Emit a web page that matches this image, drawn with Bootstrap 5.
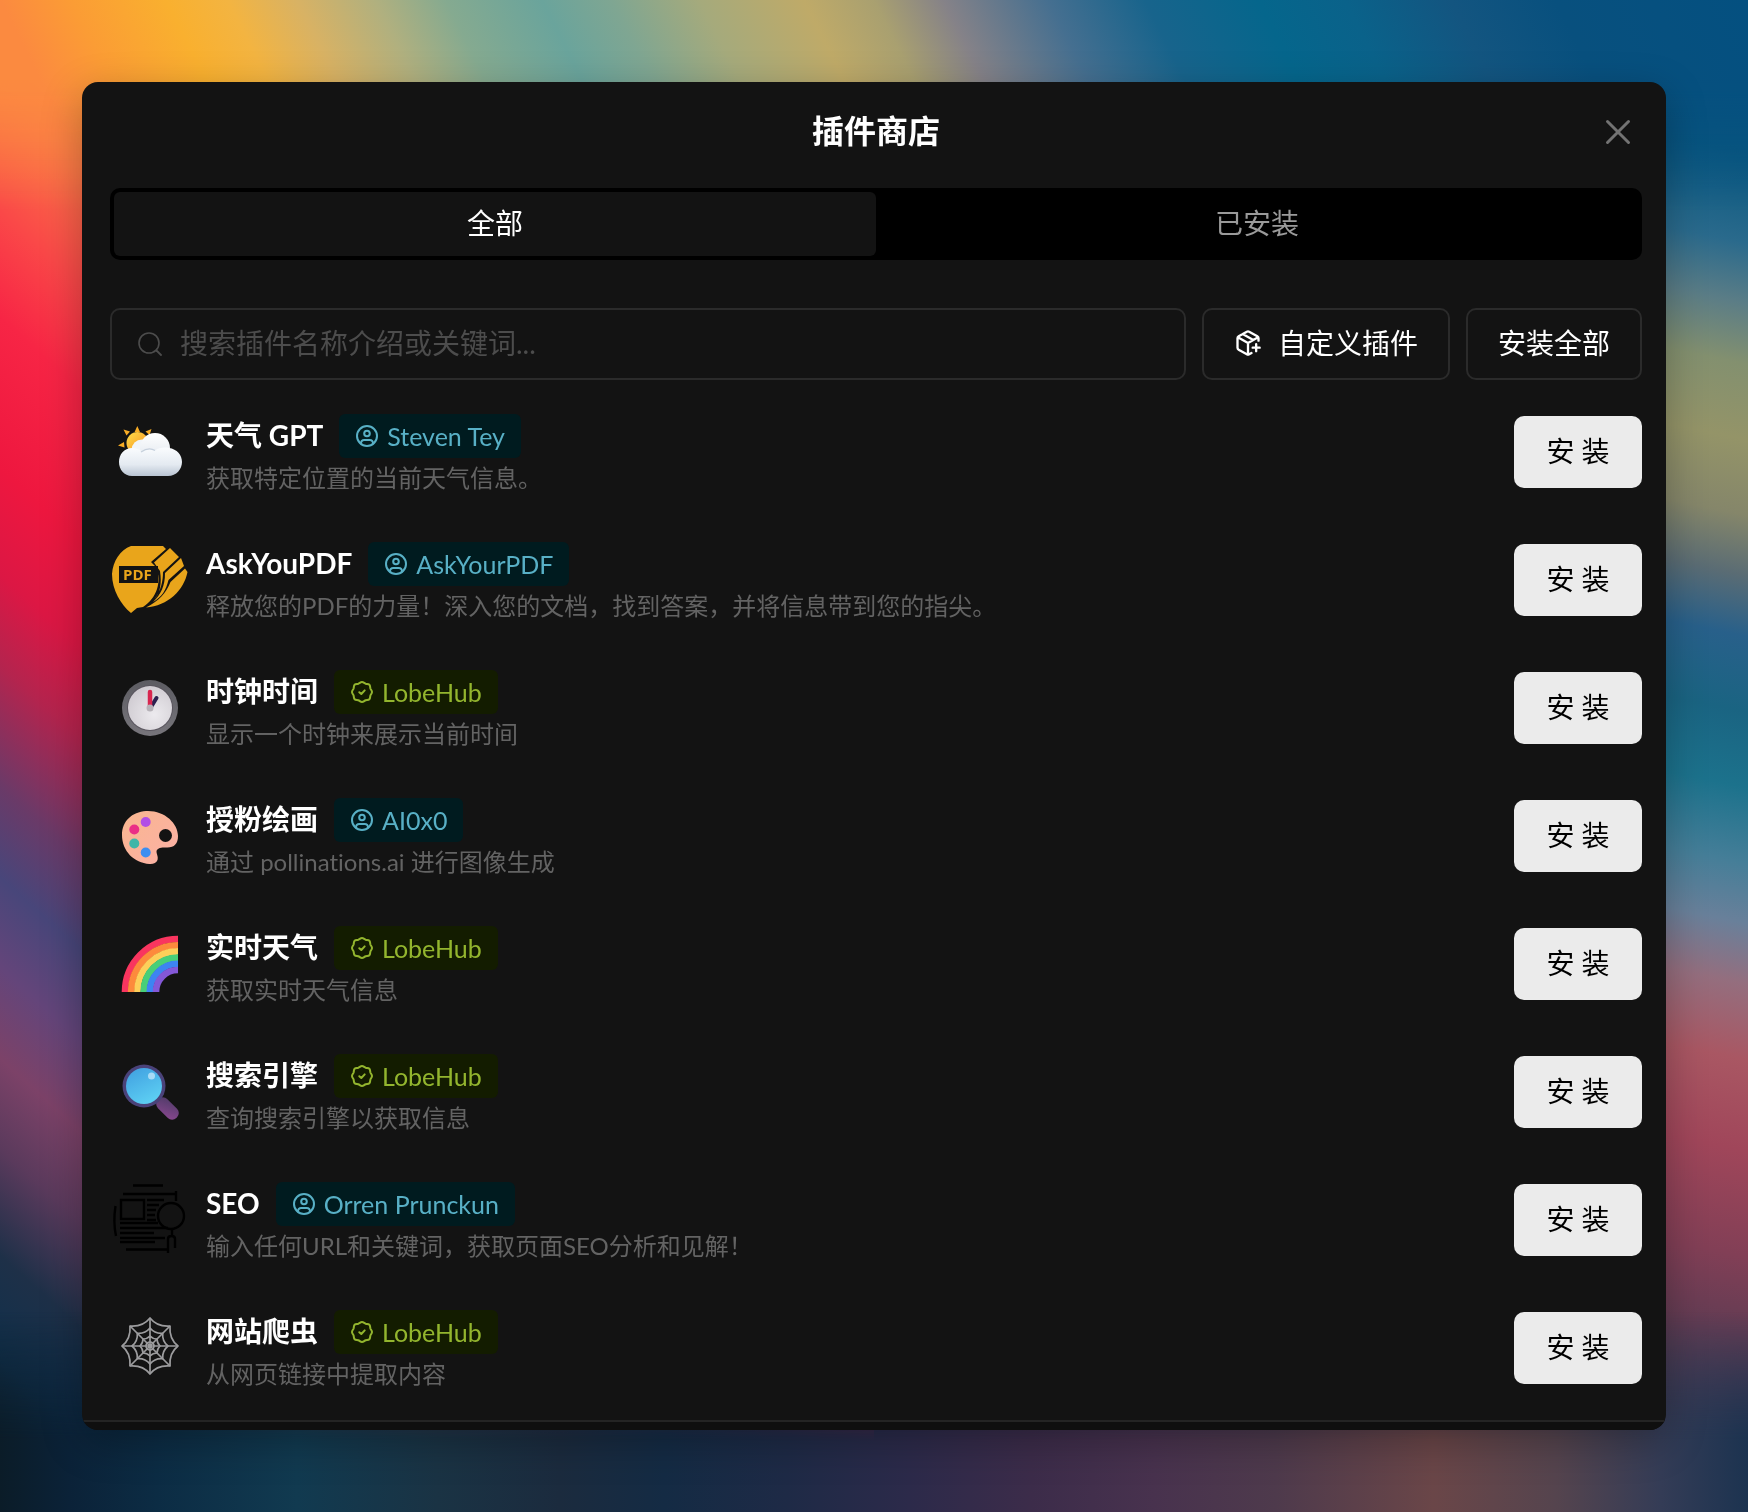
<!DOCTYPE html>
<html lang="zh-CN" data-bs-theme="dark">
<head>
<meta charset="utf-8">
<meta name="viewport" content="width=device-width, initial-scale=1">
<title>插件商店</title>
<link href="https://cdn.jsdelivr.net/npm/bootstrap@5.3.0/dist/css/bootstrap.min.css" rel="stylesheet">
<style>
  body { min-height: 100vh; padding: 82px; background: #12304a; color: #fff; font-family: Lato, "Noto Sans CJK SC", sans-serif; font-size: 28px; line-height: 40px; font-variant-ligatures: none; }
  .backdrop-art { position: fixed; inset: 0; width: 100%; height: 100%; z-index: -1; }
  .store { position: relative; background: #131313; border-radius: 16px; box-shadow: 0 12px 40px rgba(0,0,0,.28); overflow: hidden; }
  .store-head { height: 106px; padding: 0 24px 8px 28px; }
  .store-title { font-size: 32px; line-height: 48px; font-weight: 700; }
  .store-close { position: absolute; top: 26px; right: 24px; width: 48px; height: 48px; color: #737373; }
  .store-body { padding: 0 24px 8px 28px; }
  .seg { background: #000; border-radius: 10px; padding: 4px; margin-bottom: 48px; }
  .seg .btn { --bs-btn-color: #9a9a9a; --bs-btn-hover-color: #fff; height: 64px; border-radius: 6px; border: 0; padding: 0 0 2px; font-size: 28px; }
  .seg .btn.active { background: #131313; color: #fff; }
  .tools { gap: 16px; margin-bottom: 8px; }
  .field { height: 72px; border: 2px solid #2b2b2b; border-radius: 10px; padding: 0 26px; gap: 18px; color: #4c4c4c; }
  .field .form-control { background: none; border: 0; padding: 0 0 2px; font-size: 28px; line-height: 40px; color: #fff; box-shadow: none; }
  .field .form-control::placeholder { color: #4c4c4c; opacity: 1; }
  .line-btn { height: 72px; border: 2px solid #2b2b2b; border-radius: 10px; padding: 0 30px 2px; font-size: 28px; line-height: 40px; --bs-btn-color: #fff; gap: 16px; }
  .plugin { height: 128px; gap: 16px; }
  .avatar { width: 80px; height: 80px; }
  .plugin-info { padding-top: 8px; }
  .plugin-name { font-size: 28px; line-height: 42px; padding-bottom: 2px; font-weight: 700; }
  .author { height: 44px; border-radius: 6px; padding: 0 16px; gap: 8px; font-size: 25px; line-height: 44px; }
  .author-user { background: #001b1f; color: #58b0c6; }
  .author-official { background: #131c00; color: #93b52e; }
  .plugin-desc { font-size: 24px; line-height: 40px; color: #636363; }
  .install { width: 128px; height: 72px; border-radius: 10px; padding: 0 0 2px; font-size: 28px; --bs-btn-bg: #ebebeb; --bs-btn-color: #000; --bs-btn-hover-bg: #fff; }
  .store-foot { height: 10px; border-top: 2px solid #242424; background: #0f0f0f; }
  .stroke-ico { fill: none; stroke: currentColor; stroke-width: 2; stroke-linecap: round; stroke-linejoin: round; flex-shrink: 0; }
</style>
<script src="https://cdn.jsdelivr.net/npm/bootstrap@5.3.0/dist/js/bootstrap.bundle.min.js" defer></script>
</head>
<body>

<svg class="backdrop-art" viewBox="0 0 1748 1512" preserveAspectRatio="none" aria-hidden="true">
  <defs>
    <linearGradient id="bgL" gradientUnits="userSpaceOnUse" x1="0" y1="0" x2="-752" y2="835">
      <stop offset="0" stop-color="#fb9040"/><stop offset=".06" stop-color="#fb7448"/><stop offset=".14" stop-color="#fa4848"/><stop offset=".21" stop-color="#f72545"/><stop offset=".31" stop-color="#ee173f"/><stop offset=".38" stop-color="#dc1744"/><stop offset=".44" stop-color="#b4244e"/><stop offset=".52" stop-color="#6a3a68"/><stop offset=".58" stop-color="#48467a"/><stop offset=".64" stop-color="#64457a"/><stop offset=".7" stop-color="#7c4268"/><stop offset=".76" stop-color="#5a3a5c"/><stop offset=".83" stop-color="#1e3048"/><stop offset=".9" stop-color="#10304c"/><stop offset="1" stop-color="#0a1c28"/>
    </linearGradient>
    <linearGradient id="bgR" gradientUnits="userSpaceOnUse" x1="1666" y1="0" x2="1375" y2="1454">
      <stop offset="0" stop-color="#06507f"/><stop offset=".09" stop-color="#08577f"/><stop offset=".15" stop-color="#2a6a8c"/><stop offset=".19" stop-color="#5b7d86"/><stop offset=".23" stop-color="#83906f"/><stop offset=".28" stop-color="#949468"/><stop offset=".33" stop-color="#85866a"/><stop offset=".37" stop-color="#5a6c74"/><stop offset=".41" stop-color="#28608a"/><stop offset=".46" stop-color="#1a6482"/><stop offset=".51" stop-color="#1c728c"/><stop offset=".56" stop-color="#457e98"/><stop offset=".6" stop-color="#69809a"/><stop offset=".64" stop-color="#946e7e"/><stop offset=".69" stop-color="#a95763"/><stop offset=".75" stop-color="#a0465a"/><stop offset=".82" stop-color="#823f56"/><stop offset=".89" stop-color="#573b52"/><stop offset=".94" stop-color="#373650"/><stop offset="1" stop-color="#1a2c48"/>
    </linearGradient>
    <linearGradient id="bgT" gradientUnits="userSpaceOnUse" x1="0" y1="0" x2="1398" y2="-699">
      <stop offset="0" stop-color="#fb8a40"/><stop offset=".04" stop-color="#fb9c35"/><stop offset=".095" stop-color="#f9b02f"/><stop offset=".13" stop-color="#f3b441"/><stop offset=".17" stop-color="#d8b264"/><stop offset=".215" stop-color="#b0b07f"/><stop offset=".255" stop-color="#85aa90"/><stop offset=".31" stop-color="#6aa49c"/><stop offset=".35" stop-color="#7fa692"/><stop offset=".4" stop-color="#a5aa7c"/><stop offset=".46" stop-color="#bfaa68"/><stop offset=".5" stop-color="#a9a070"/><stop offset=".54" stop-color="#858288"/><stop offset=".6" stop-color="#456f90"/><stop offset=".655" stop-color="#18648c"/><stop offset=".72" stop-color="#05668c"/><stop offset=".77" stop-color="#0a628a"/><stop offset=".83" stop-color="#135580"/><stop offset=".89" stop-color="#08507e"/><stop offset="1" stop-color="#045080"/>
    </linearGradient>
    <linearGradient id="bgB">
      <stop offset="0" stop-color="#0b1c28"/><stop offset=".04" stop-color="#0b2238"/><stop offset=".09" stop-color="#0c2c44"/><stop offset=".17" stop-color="#113a50"/><stop offset=".25" stop-color="#1a3344"/><stop offset=".32" stop-color="#1b2b3e"/><stop offset=".38" stop-color="#142b44"/><stop offset=".45" stop-color="#1e2a46"/><stop offset=".52" stop-color="#2c2a4a"/><stop offset=".59" stop-color="#3c2c4a"/><stop offset=".66" stop-color="#48324e"/><stop offset=".73" stop-color="#4e3a4c"/><stop offset=".82" stop-color="#6a4648"/><stop offset=".89" stop-color="#55444e"/><stop offset=".95" stop-color="#343c56"/><stop offset="1" stop-color="#1c3350"/>
    </linearGradient>
    <linearGradient id="fadeT" x1="0" y1="0" x2="0" y2="1"><stop offset=".38" stop-color="#fff"/><stop offset="1" stop-color="#000"/></linearGradient>
    <linearGradient id="fadeB" x1="0" y1="1" x2="0" y2="0"><stop offset=".36" stop-color="#fff"/><stop offset="1" stop-color="#000"/></linearGradient>
    <mask id="mT"><rect width="1748" height="210" fill="url(#fadeT)"/></mask>
    <mask id="mB"><rect y="1312" width="1748" height="200" fill="url(#fadeB)"/></mask>
  </defs>
  <rect width="874" height="1512" fill="url(#bgL)"/>
  <rect x="874" width="874" height="1512" fill="url(#bgR)"/>
  <rect width="1748" height="210" fill="url(#bgT)" mask="url(#mT)"/>
  <rect y="1312" width="1748" height="200" fill="url(#bgB)" mask="url(#mB)"/>
</svg>

<svg class="d-none" aria-hidden="true">
  <symbol id="ico-user" viewBox="0 0 24 24"><circle cx="12" cy="12" r="10"/><circle cx="12" cy="9.500" r="2.800"/><path d="M6 19.600c-.2-2.200 1.200-3.600 3.200-3.600h5.600c2 0 3.400 1.400 3.200 3.600"/></symbol>
  <symbol id="ico-check" viewBox="0 0 24 24"><path d="M12 2c1.500 0 2.300 1.300 3.700 1.800 1.300.4 2.700 0 3.700 1s.6 2.400 1 3.700C20.800 9.700 22 10.500 22 12s-1.200 2.300-1.600 3.500c-.4 1.300 0 2.700-1 3.700s-2.400.6-3.700 1C14.300 20.700 13.500 22 12 22s-2.300-1.300-3.700-1.800c-1.300-.4-2.700 0-3.700-1s-.6-2.400-1-3.700C3.200 14.300 2 13.500 2 12s1.200-2.300 1.600-3.500c.4-1.300 0-2.700 1-3.700s2.400-.6 3.700-1C9.700 3.300 10.500 2 12 2Z"/><path d="m9.300 12.200 2 1.800 3.400-3.600"/></symbol>
</svg>

<main class="store" role="dialog" aria-labelledby="store-title">
  <header class="store-head d-flex align-items-center justify-content-center">
    <h1 class="store-title m-0" id="store-title">插件商店</h1>
    <button class="store-close btn border-0 p-0 d-flex align-items-center justify-content-center" type="button" aria-label="关闭">
      <svg class="stroke-ico" width="28" height="28" viewBox="0 0 28 28"><path d="M3.500 3.500 24.500 24.500M24.500 3.500 3.500 24.500" stroke-width="3"/></svg>
    </button>
  </header>

  <div class="store-body">
    <div class="seg d-flex" role="tablist">
      <button class="btn active flex-fill w-50" type="button" role="tab" aria-selected="true">全部</button>
      <button class="btn flex-fill w-50" type="button" role="tab" aria-selected="false">已安装</button>
    </div>

    <div class="tools d-flex">
      <div class="field d-flex align-items-center flex-grow-1">
        <svg class="stroke-ico" width="24" height="24" viewBox="0 0 24 24"><circle cx="11" cy="11" r="10" stroke-width="1.600"/><path d="m18.500 18.500 4.500 4.500" stroke-width="1.800"/></svg>
        <input class="form-control" type="text" aria-label="搜索插件" placeholder="搜索插件名称介绍或关键词...">
      </div>
      <button class="line-btn btn d-flex align-items-center flex-shrink-0" type="button">
        <svg class="stroke-ico" width="28" height="28" viewBox="0 0 24 24"><path d="M16 16h6M19 13v6M21 10V8a2 2 0 0 0-1-1.730l-7-4a2 2 0 0 0-2 0l-7 4A2 2 0 0 0 3 8v8a2 2 0 0 0 1 1.730l7 4a2 2 0 0 0 2 0l2-1.140M7.500 4.270l9 5.150M3.290 7 12 12l8.710-5M12 22V12"/></svg>
        自定义插件
      </button>
      <button class="line-btn btn flex-shrink-0" type="button">安装全部</button>
    </div>

    <ul class="list-unstyled m-0">
      <li class="plugin d-flex align-items-center">
        <svg class="avatar flex-shrink-0" viewBox="0 0 80 80" role="img" aria-label="天气">
          <defs>
            <linearGradient id="sun" x1="0" y1="0" x2="1" y2="1"><stop offset="0" stop-color="#ffdd4a"/><stop offset="1" stop-color="#f58a1c"/></linearGradient>
            <linearGradient id="cl1" x1="0" y1="0" x2="0" y2="1"><stop offset="0" stop-color="#fff"/><stop offset="1" stop-color="#dde4ec"/></linearGradient>
            <linearGradient id="cl2" x1="0" y1="0" x2="0" y2="1"><stop offset="0" stop-color="#fafcfe"/><stop offset=".6" stop-color="#e4eaf1"/><stop offset="1" stop-color="#b9c4d2"/></linearGradient>
          </defs>
          <path fill="#f9ad25" d="m27.300 14 2.700 6h-5.400ZM13.500 17.500l6.500 2-3.500 4ZM41.500 17l-2 6-4-3.500ZM8 33.500l6-3.500.5 5.500ZM12 44l2.500-5 3.500 3Z"/>
          <circle cx="27.500" cy="31" r="11" fill="url(#sun)"/>
          <circle cx="32" cy="38" r="10.500" fill="#f1f5f9"/>
          <circle cx="45" cy="36" r="15" fill="url(#cl1)"/>
          <path fill="url(#cl2)" d="M22 36c4 0 7 1.500 10 3.500 4-3 9-3.500 13-1 4-3 9-3.500 14-2.500 8 1 13 7 13 14s-5.500 14-14 14H22C14 64 9 57.500 9 50s5-14 13-14Z"/>
          <path d="M31 40c5-3.500 10-4 14-1.500" fill="none" stroke="#c6d0dc" stroke-width="1.300"/>
        </svg>
        <div class="plugin-info flex-grow-1">
          <div class="d-flex align-items-center gap-3"><h2 class="plugin-name m-0">天气 GPT</h2><span class="author author-user d-flex align-items-center"><svg class="stroke-ico" width="24" height="24"><use href="#ico-user"/></svg>Steven Tey</span></div>
          <p class="plugin-desc m-0">获取特定位置的当前天气信息。</p>
        </div>
        <button class="install btn flex-shrink-0" type="button">安 装</button>
      </li>

      <li class="plugin d-flex align-items-center">
        <svg class="avatar flex-shrink-0" viewBox="0 0 80 80" role="img" aria-label="AskYourPDF">
          <path fill="#e9a51b" d="M21 6H53L56 9 41 22 46 27C52 42 47 58 33 67L27 68 21 73C11 65 2 50 2 34 3 21 10 10 21 6Z"/>
          <path fill="#e9a51b" d="M60 8 44 22.500 50 31C52 44 50 53 44 60 51 51 53 41 53 32L69 17Z"/>
          <path fill="#e9a51b" d="M71 18 55 33C55 46 51 54 43 62 52 57 56 50 58.500 40L74 26Z"/>
          <path fill="#e9a51b" d="M75 28.500 60.500 42C56 53 49 61 36 67.500 58 66 74 50 77.500 32Z"/>
          <rect x="9" y="26" width="39" height="17" fill="#131313"/>
          <text x="13" y="40" font-family="Open Sans, sans-serif" font-weight="700" font-size="15" fill="#e9a51b">PDF</text>
        </svg>
        <div class="plugin-info flex-grow-1">
          <div class="d-flex align-items-center gap-3"><h2 class="plugin-name m-0">AskYouPDF</h2><span class="author author-user d-flex align-items-center"><svg class="stroke-ico" width="24" height="24"><use href="#ico-user"/></svg>AskYourPDF</span></div>
          <p class="plugin-desc m-0">释放您的PDF的力量！深入您的文档，找到答案，并将信息带到您的指尖。</p>
        </div>
        <button class="install btn flex-shrink-0" type="button">安 装</button>
      </li>

      <li class="plugin d-flex align-items-center">
        <svg class="avatar flex-shrink-0" viewBox="0 0 80 80" role="img" aria-label="时钟">
          <defs>
            <radialGradient id="face" cx=".6" cy=".65" r=".7"><stop offset="0" stop-color="#eceaee"/><stop offset="1" stop-color="#cfcbd1"/></radialGradient>
            <linearGradient id="rim" x1="0" y1="0" x2="0" y2="1"><stop offset="0" stop-color="#5c5c62"/><stop offset="1" stop-color="#77757b"/></linearGradient>
          </defs>
          <circle cx="40" cy="40" r="28" fill="url(#rim)"/><circle cx="40" cy="40" r="23" fill="#5a565f"/><circle cx="40" cy="40" r="22" fill="url(#face)"/>
          <path d="m41 39 5.500-9" stroke="#2b2150" stroke-width="4" stroke-linecap="round"/>
          <path d="M40 38V24" stroke="#d8264f" stroke-width="4.500" stroke-linecap="round"/>
          <circle cx="40" cy="40" r="3.500" fill="#b6b2b8"/>
        </svg>
        <div class="plugin-info flex-grow-1">
          <div class="d-flex align-items-center gap-3"><h2 class="plugin-name m-0">时钟时间</h2><span class="author author-official d-flex align-items-center"><svg class="stroke-ico" width="24" height="24"><use href="#ico-check"/></svg>LobeHub</span></div>
          <p class="plugin-desc m-0">显示一个时钟来展示当前时间</p>
        </div>
        <button class="install btn flex-shrink-0" type="button">安 装</button>
      </li>

      <li class="plugin d-flex align-items-center">
        <svg class="avatar flex-shrink-0" viewBox="0 0 80 80" role="img" aria-label="调色板">
          <defs><linearGradient id="pal" x1="0" y1="0" x2="1" y2="1"><stop offset="0" stop-color="#f9b68f"/><stop offset="1" stop-color="#fbb0a6"/></linearGradient></defs>
          <path fill="url(#pal)" d="M36 15C54 14 68 27 68 40c0 8-4 12-12 11.500-5-.5-9.500 1-9.500 4 0 3 2 5 1 8.500-1 3-4 4.200-8 4C24 67 12 55 12 39 12 25 22 16 36 15Z"/>
          <circle cx="55.500" cy="39.500" r="6.500" fill="#131313"/>
          <circle cx="35.700" cy="26" r="5" fill="#b24ee6"/><circle cx="24.300" cy="33.500" r="5" fill="#ea2f86"/><circle cx="24.300" cy="47.500" r="5" fill="#3fb6a8"/><circle cx="35.700" cy="56.500" r="5" fill="#3c8ef0"/>
        </svg>
        <div class="plugin-info flex-grow-1">
          <div class="d-flex align-items-center gap-3"><h2 class="plugin-name m-0">授粉绘画</h2><span class="author author-user d-flex align-items-center"><svg class="stroke-ico" width="24" height="24"><use href="#ico-user"/></svg>AI0x0</span></div>
          <p class="plugin-desc m-0">通过 pollinations.ai 进行图像生成</p>
        </div>
        <button class="install btn flex-shrink-0" type="button">安 装</button>
      </li>

      <li class="plugin d-flex align-items-center">
        <svg class="avatar flex-shrink-0" viewBox="0 0 80 80" role="img" aria-label="彩虹">
          <g fill="none" stroke-width="6.600">
            <path stroke="#f9355f" d="M15 68A53 53 0 0 1 68 15"/><path stroke="#fd8a3c" d="M21.200 68A46.800 46.800 0 0 1 68 21.200"/><path stroke="#fdcf5a" d="M27.400 68A40.600 40.600 0 0 1 68 27.400"/><path stroke="#48cf78" d="M33.600 68A34.400 34.400 0 0 1 68 33.600"/><path stroke="#3d84f2" d="M39.800 68A28.200 28.200 0 0 1 68 39.800"/><path stroke="#8458d8" d="M46 68A22 22 0 0 1 68 46"/>
          </g>
        </svg>
        <div class="plugin-info flex-grow-1">
          <div class="d-flex align-items-center gap-3"><h2 class="plugin-name m-0">实时天气</h2><span class="author author-official d-flex align-items-center"><svg class="stroke-ico" width="24" height="24"><use href="#ico-check"/></svg>LobeHub</span></div>
          <p class="plugin-desc m-0">获取实时天气信息</p>
        </div>
        <button class="install btn flex-shrink-0" type="button">安 装</button>
      </li>

      <li class="plugin d-flex align-items-center">
        <svg class="avatar flex-shrink-0" viewBox="0 0 80 80" role="img" aria-label="放大镜">
          <defs>
            <linearGradient id="lens" x1="0" y1="0" x2=".5" y2="1"><stop offset="0" stop-color="#3f9ee0"/><stop offset="1" stop-color="#5ccdf2"/></linearGradient>
            <linearGradient id="grip" x1="0" y1="0" x2="1" y2="1"><stop offset="0" stop-color="#4f3b68"/><stop offset="1" stop-color="#8a4890"/></linearGradient>
          </defs>
          <path d="m48 48 5 5" stroke="#473a66" stroke-width="7"/>
          <rect x="44.500" y="50" width="26" height="13" rx="6" transform="rotate(45 57.500 56.500)" fill="url(#grip)"/>
          <circle cx="34" cy="34" r="21.500" fill="#4a4279"/><circle cx="34" cy="34" r="18" fill="url(#lens)"/><circle cx="41.500" cy="24" r="3.500" fill="#b9e2f8" opacity=".85"/>
        </svg>
        <div class="plugin-info flex-grow-1">
          <div class="d-flex align-items-center gap-3"><h2 class="plugin-name m-0">搜索引擎</h2><span class="author author-official d-flex align-items-center"><svg class="stroke-ico" width="24" height="24"><use href="#ico-check"/></svg>LobeHub</span></div>
          <p class="plugin-desc m-0">查询搜索引擎以获取信息</p>
        </div>
        <button class="install btn flex-shrink-0" type="button">安 装</button>
      </li>

      <li class="plugin d-flex align-items-center">
        <svg class="avatar flex-shrink-0" viewBox="0 0 80 80" role="img" aria-label="SEO">
          <g fill="none" stroke="#000" stroke-width="2.400">
            <path d="M23 5.500h30M13 14h53M66 11v10M5.500 26Q3 42 6 56M11 20h23v19H11ZM37 20h17M37 25h12M37 30h9M37 35h8M37 40h9M10 43h38M10 48h48M10 53h34M10 58h45M10 62h35M16 69.500h42"/>
            <circle cx="61" cy="36" r="13"/><path d="M62 50v6M58 73V59q0-3 3.500-3t3.500 3v9"/>
          </g>
        </svg>
        <div class="plugin-info flex-grow-1">
          <div class="d-flex align-items-center gap-3"><h2 class="plugin-name m-0">SEO</h2><span class="author author-user d-flex align-items-center"><svg class="stroke-ico" width="24" height="24"><use href="#ico-user"/></svg>Orren Prunckun</span></div>
          <p class="plugin-desc m-0">输入任何URL和关键词，获取页面SEO分析和见解！</p>
        </div>
        <button class="install btn flex-shrink-0" type="button">安 装</button>
      </li>

      <li class="plugin d-flex align-items-center">
        <svg class="avatar flex-shrink-0" viewBox="-40 -38 80 80" role="img" aria-label="蜘蛛网">
          <g fill="none" stroke="#9c9c9e" stroke-width="1.700" stroke-linejoin="round">
            <path d="M0-28V28M-28 0H28M-20-20 20 20M20-20-20 20"/>
            <path d="M0-28Q7-19 20-20 19-7 28 0 19 7 20 20 7 19 0 28-7 19-20 20-19 7-28 0-19-7-20-20-7-19 0-28Z"/>
            <path d="M0-18Q5-12 12.700-12.700 12-5 18 0 12 5 12.700 12.700 5 12 0 18-5 12-12.700 12.700-12 5-18 0-12-5-12.700-12.700-5-12 0-18Z"/>
            <path d="M0-10Q3-7 7-7 7-3 10 0 7 3 7 7 3 7 0 10-3 7-7 7-7 3-10 0-7-3-7-7-3-7 0-10Z"/>
            <circle r="4"/>
          </g>
        </svg>
        <div class="plugin-info flex-grow-1">
          <div class="d-flex align-items-center gap-3"><h2 class="plugin-name m-0">网站爬虫</h2><span class="author author-official d-flex align-items-center"><svg class="stroke-ico" width="24" height="24"><use href="#ico-check"/></svg>LobeHub</span></div>
          <p class="plugin-desc m-0">从网页链接中提取内容</p>
        </div>
        <button class="install btn flex-shrink-0" type="button">安 装</button>
      </li>
    </ul>
  </div>
  <div class="store-foot"></div>
</main>

</body>
</html>
